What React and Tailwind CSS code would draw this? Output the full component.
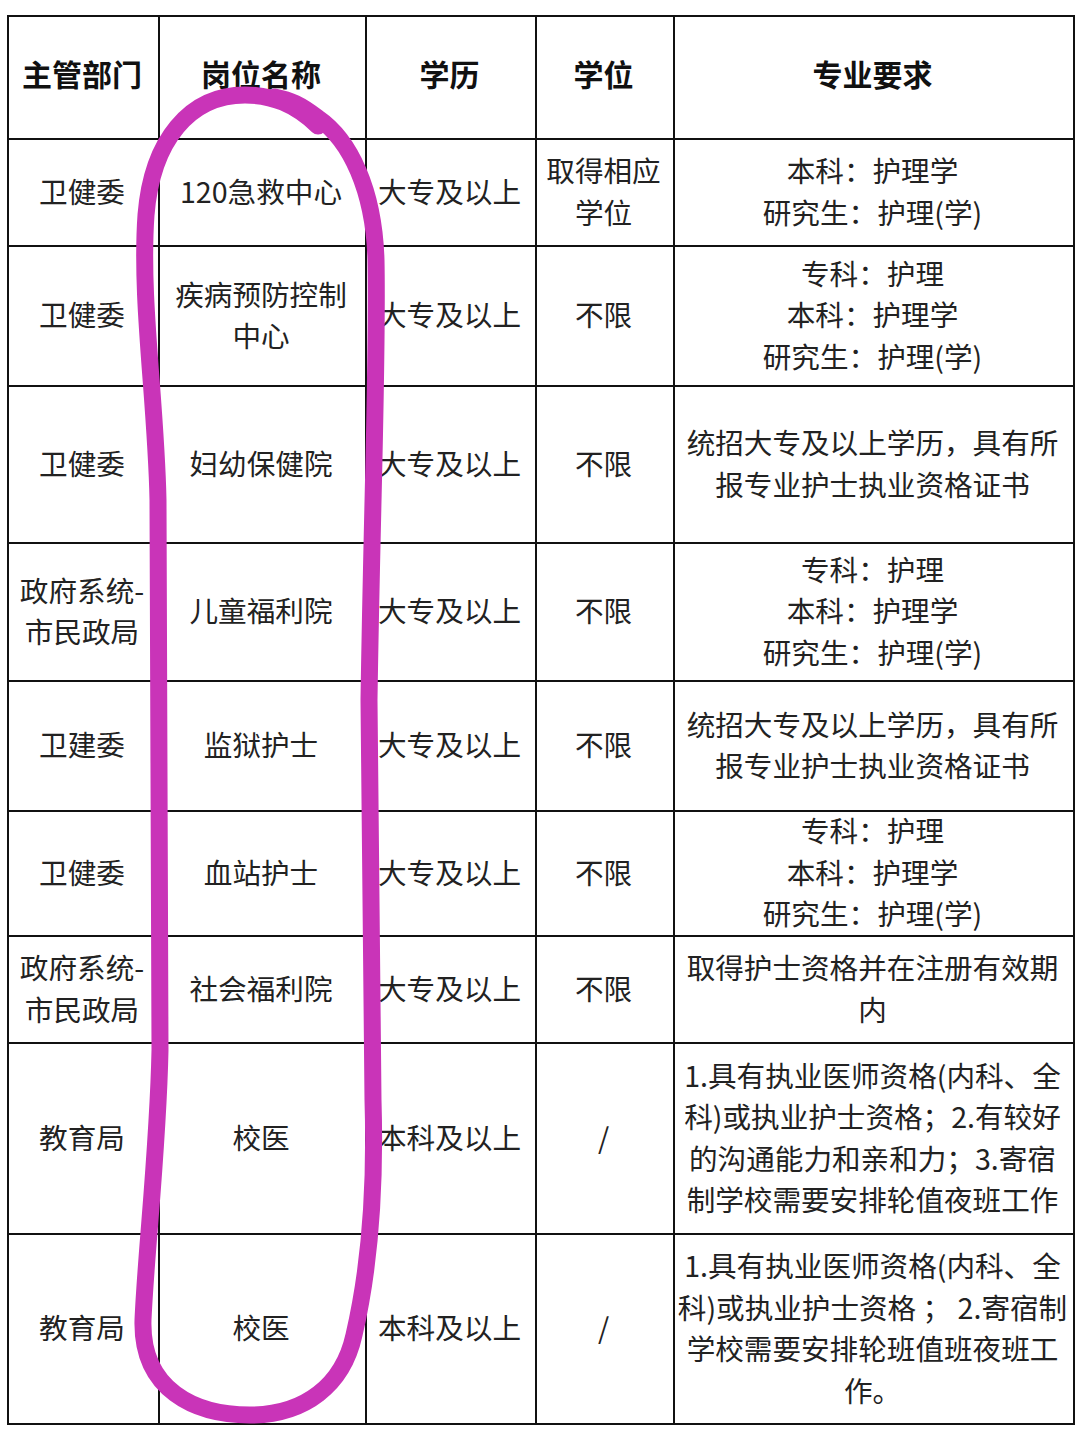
const rows = [
  { h: "h-[107px]", dept: ["卫健委"], post: ["120急救中心"], edu: "大专及以上", deg: ["取得相应", "学位"], req: ["本科：护理学", "研究生：护理(学)"] },
  { h: "h-[140px]", dept: ["卫健委"], post: ["疾病预防控制", "中心"], edu: "大专及以上", deg: ["不限"], req: ["专科：护理", "本科：护理学", "研究生：护理(学)"] },
  { h: "h-[157px]", dept: ["卫健委"], post: ["妇幼保健院"], edu: "大专及以上", deg: ["不限"], req: ["统招大专及以上学历，具有所", "报专业护士执业资格证书"] },
  { h: "h-[138px]", dept: ["政府系统-", "市民政局"], post: ["儿童福利院"], edu: "大专及以上", deg: ["不限"], req: ["专科：护理", "本科：护理学", "研究生：护理(学)"] },
  { h: "h-[130px]", dept: ["卫建委"], post: ["监狱护士"], edu: "大专及以上", deg: ["不限"], req: ["统招大专及以上学历，具有所", "报专业护士执业资格证书"] },
  { h: "h-[125px]", dept: ["卫健委"], post: ["血站护士"], edu: "大专及以上", deg: ["不限"], req: ["专科：护理", "本科：护理学", "研究生：护理(学)"] },
  { h: "h-[107px]", dept: ["政府系统-", "市民政局"], post: ["社会福利院"], edu: "大专及以上", deg: ["不限"], req: ["取得护士资格并在注册有效期", "内"] },
  { h: "h-[191px]", dept: ["教育局"], post: ["校医"], edu: "本科及以上", deg: ["/"], req: ["1.具有执业医师资格(内科、全", "科)或执业护士资格；2.有较好", "的沟通能力和亲和力；3.寄宿", "制学校需要安排轮值夜班工作"] },
  { h: "h-[190px]", dept: ["教育局"], post: ["校医"], edu: "本科及以上", deg: ["/"], req: ["1.具有执业医师资格(内科、全", "科)或执业护士资格 ； 2.寄宿制", "学校需要安排轮班值班夜班工", "作。"] },
];

// negative margins keep tall text from stretching the fixed row heights
const Lines = ({ lines }) => (
  <div className="-my-[6px] -translate-y-[2px]">
    {lines.map((l, i) => (
      <div key={i} className="whitespace-nowrap">
        {l}
      </div>
    ))}
  </div>
);

const cell = "border-2 border-[#111] text-center align-middle p-0 pr-[3px]";

export default function App() {
  return (
    <div
      className="relative w-[1080px] h-[1440px] bg-white overflow-hidden text-[#222]"
      style={{ fontFamily: '"Noto Sans CJK SC", "Noto Sans", sans-serif' }}
    >
      <div className="pt-[15px] pl-[7px]">
        <table className="border-collapse table-fixed w-[1066px] text-[28.6px] leading-[41.5px]">
          <colgroup>
            <col className="w-[151px]" />
            <col className="w-[207px]" />
            <col className="w-[170px]" />
            <col className="w-[138px]" />
            <col className="w-[400px]" />
          </colgroup>
          <thead>
            <tr className="h-[123px] text-[30px] font-bold text-[#111]">
              {["主管部门", "岗位名称", "学历", "学位", "专业要求"].map((t) => (
                <th key={t} className={cell + " pb-[8px]"}>
                  {t}
                </th>
              ))}
            </tr>
          </thead>
          <tbody>
            {rows.map((r, i) => (
              <tr key={i} className={r.h}>
                <td className={cell}>
                  <Lines lines={r.dept} />
                </td>
                <td className={cell}>
                  <Lines lines={r.post} />
                </td>
                <td className={cell}>
                  <Lines lines={[r.edu]} />
                </td>
                <td className={cell}>
                  <Lines lines={r.deg} />
                </td>
                <td className={cell}>
                  <Lines lines={r.req} />
                </td>
              </tr>
            ))}
          </tbody>
        </table>
      </div>

      {/* hand-drawn highlight loop */}
      <svg className="absolute inset-0 pointer-events-none" width="1080" height="1440" viewBox="0 0 1080 1440">
        <path
          d="M 318 126 C 295 104 272 95 245 95 C 190 95 152 140 146 215 C 140 300 156 400 158 500 L 160 1050 C 158 1150 146 1250 143 1320 C 141 1390 195 1415 250 1415 C 305 1415 343 1385 354 1335 C 368 1275 376 1200 373 1100 L 369 700 C 372 500 378 360 376 260 C 374 190 350 140 318 118 C 300 104 290 100 275 97"
          fill="none"
          stroke="#c934b8"
          strokeWidth="17"
          strokeLinecap="round"
          strokeLinejoin="round"
        />
      </svg>
    </div>
  );
}
